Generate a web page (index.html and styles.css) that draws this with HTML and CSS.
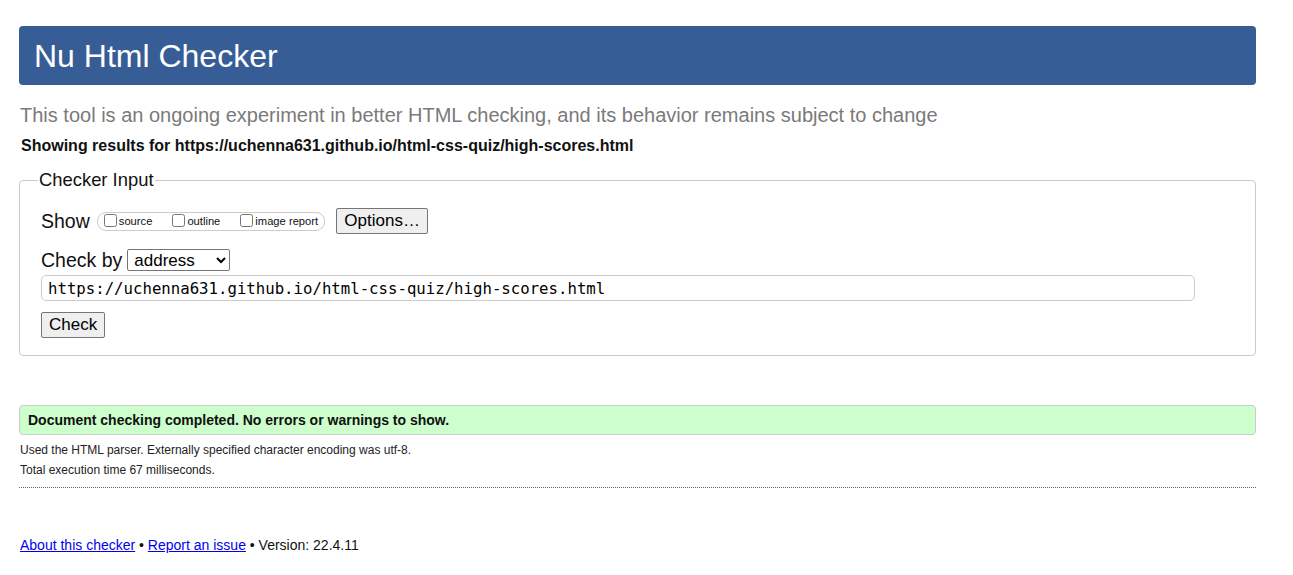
FILE: index.html
```html
<!DOCTYPE html>
<html lang="en">
<head>
<meta charset="utf-8">
<title>Nu Html Checker</title>
<link rel="stylesheet" href="styles.css">
</head>
<body>
<div class="page">
  <h1 class="banner">Nu Html Checker</h1>
  <p class="subtitle">This tool is an ongoing experiment in better HTML checking, and its behavior remains subject to change</p>
  <p class="showing">Showing results for https://uchenna631.github.io/html-css-quiz/high-scores.html</p>

  <fieldset class="input-box">
    <legend class="legend">Checker Input</legend>
    <div class="row row-show">
      <span class="label">Show</span>
      <span class="opts">
        <label class="opt"><input type="checkbox" class="cb">source</label>
        <label class="opt"><input type="checkbox" class="cb">outline</label>
        <label class="opt"><input type="checkbox" class="cb">image report</label>
      </span>
      <button class="btn btn-options" type="button">Options…</button>
    </div>
    <div class="row row-by">
      <span class="label">Check by</span>
      <select class="sel"><option>address</option></select>
    </div>
    <input class="url" type="text" value="https://uchenna631.github.io/html-css-quiz/high-scores.html">
    <div class="row row-check">
      <button class="btn btn-check" type="button">Check</button>
    </div>
  </fieldset>

  <div class="success">Document checking completed. No errors or warnings to show.</div>
  <p class="detail detail-first">Used the HTML parser. Externally specified character encoding was utf-8.</p>
  <p class="detail">Total execution time 67 milliseconds.</p>
  <hr class="rule">

  <p class="footer"><a href="#" class="link">About this checker</a> • <a href="#" class="link">Report an issue</a> • Version: 22.4.11</p>
</div>
</body>
</html>
```

FILE: styles.css
```css
html, body {
  margin: 0;
  padding: 0;
  background: #fff;
}

body {
  font-family: "Liberation Sans", Arial, sans-serif;
  color: #000;
}

.page {
  padding: 26px 37px 0 19px;
}

.banner {
  margin: 0;
  height: 59px;
  line-height: 60px;
  background: #365d95;
  color: #fff;
  border-radius: 4px;
  font-size: 32px;
  font-weight: normal;
  padding-left: 15px;
}

.subtitle {
  margin: 18px 0 0 1px;
  font-size: 20px;
  line-height: 24px;
  color: #7a7a7a;
}

.showing {
  margin: 10px 0 0 2px;
  font-size: 16px;
  line-height: 18px;
  font-weight: bold;
  color: #111;
}

.input-box {
  margin: 14px 0 0 0;
  padding: 17px 20px 17px 21px;
  border: 1px solid #ccc;
  border-radius: 4px;
  display: flex;
  flex-direction: column;
}

.legend {
  font-size: 18.4px;
  line-height: 22px;
  padding: 0 1px;
  margin-left: -3px;
  color: #111;
}

.row {
  display: flex;
  align-items: center;
}

.label {
  font-size: 19.5px;
  color: #111;
}

.row-show {
  height: 26px;
}

.opts {
  display: flex;
  align-items: center;
  gap: 20px;
  margin-left: 7px;
  height: 17px;
  padding: 0 6px 0 6px;
  border: 1px solid #ccc;
  border-radius: 9px;
  font-size: 11.2px;
  color: #111;
}

.opt {
  display: flex;
  align-items: center;
  line-height: 13px;
}

.cb {
  width: 13px;
  height: 13px;
  margin: 0 2px 2px 0;
}

.btn {
  font-family: "Liberation Sans", Arial, sans-serif;
  font-size: 17px;
  color: #000;
  background: #efefef;
  border: 1px solid #767676;
  border-radius: 2px;
  height: 26px;
  padding: 0 7px;
}

.btn-options {
  margin-left: 11px;
  width: 92px;
}

.row-by {
  margin-top: 15px;
  height: 22px;
}

.sel {
  margin-left: 5px;
  width: 103px;
  height: 22px;
  font-family: "Liberation Sans", Arial, sans-serif;
  font-size: 17px;
  border: 1px solid #767676;
  border-radius: 2px;
  padding: 0 0 0 2px;
  background: #fff;
  color: #000;
}

.url {
  margin-top: 4px;
  width: 1154px;
  height: 26px;
  box-sizing: border-box;
  border: 1px solid #ccc;
  border-radius: 5px;
  padding: 0 6px;
  font-family: "DejaVu Sans Mono", "Liberation Mono", monospace;
  font-size: 15.7px;
  color: #000;
  outline: none;
}

.row-check {
  margin-top: 11px;
}

.btn-check {
  width: 64px;
  height: 26px;
}

.success {
  margin-top: 49px;
  height: 28px;
  line-height: 28px;
  border: 1px solid #ccc;
  border-radius: 4px;
  background: #ccffcc;
  padding-left: 8px;
  font-size: 14px;
  font-weight: bold;
  color: #111;
}

.detail {
  margin: 0 0 0 1px;
  font-size: 12px;
  line-height: 20px;
  color: #222;
}

.detail-first {
  margin-top: 5px;
}

.rule {
  margin: 7px 0 0 0;
  border: 0;
  border-top: 1px dotted #666;
  height: 0;
}

.footer {
  margin: 47px 0 0 1px;
  font-size: 14px;
  line-height: 20px;
  color: #111;
}

.link {
  color: #0000ee;
  text-decoration: underline;
}
```
